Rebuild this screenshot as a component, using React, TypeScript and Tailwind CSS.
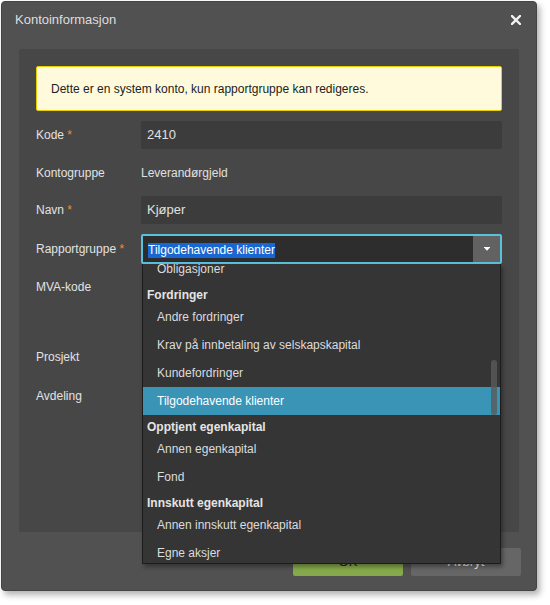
import React from 'react';

type Option = { kind: 'group' | 'item'; label: string; selected?: boolean };

const options: Option[] = [
  { kind: 'item', label: 'Obligasjoner' },
  { kind: 'group', label: 'Fordringer' },
  { kind: 'item', label: 'Andre fordringer' },
  { kind: 'item', label: 'Krav på innbetaling av selskapskapital' },
  { kind: 'item', label: 'Kundefordringer' },
  { kind: 'item', label: 'Tilgodehavende klienter', selected: true },
  { kind: 'group', label: 'Opptjent egenkapital' },
  { kind: 'item', label: 'Annen egenkapital' },
  { kind: 'item', label: 'Fond' },
  { kind: 'group', label: 'Innskutt egenkapital' },
  { kind: 'item', label: 'Annen innskutt egenkapital' },
  { kind: 'item', label: 'Egne aksjer' },
];

function Label({ text, required }: { text: string; required?: boolean }) {
  return (
    <div className="w-[105px] shrink-0 text-[12px] text-[#e2e2e2]">
      {text}
      {required && <span className="text-[#e8912d]"> *</span>}
    </div>
  );
}

function RapportSelect() {
  return (
    <div className="relative flex-1">
      <div className="flex h-[30px] items-stretch rounded-[2px] border-2 border-[#5bc0de] bg-[#2d2d2d]">
        <div className="flex flex-1 items-center pl-[5px] pt-[2px] text-[12px]">
          <span className="bg-[#1967d2] leading-[15px] text-white">Tilgodehavende klienter</span>
        </div>
        <div className="flex w-[27px] items-center justify-center bg-[#626262]">
          <svg width="6" height="4" viewBox="0 0 6 4">
            <rect x="0" y="0" width="6" height="1" fill="#fff" />
            <path d="M0.5 1 L5.5 1 L3 3.8 Z" fill="#fff" />
          </svg>
        </div>
      </div>

      {/* open dropdown list */}
      <div className="absolute left-px right-px top-[30px] z-10 h-[300px] overflow-hidden border border-t-0 border-[#1c1c1c] bg-[#353535] shadow-[2px_3px_4px_rgba(0,0,0,0.35)]">
        <div className="-mt-[9px]">
          {options.map((o, i) =>
            o.kind === 'group' ? (
              <div key={i} className="flex h-[20px] items-end pl-[4px] text-[12px] font-bold leading-[16px] text-[#e4e4e4]">
                {o.label}
              </div>
            ) : (
              <div
                key={i}
                className={`flex h-[28px] items-center pl-[14px] text-[12px] ${
                  o.selected ? 'bg-[#3a94b6] text-white' : 'text-[#dcdcdc]'
                }`}
              >
                {o.label}
              </div>
            )
          )}
        </div>
        <div className="absolute right-[3px] top-[96px] h-[55px] w-[6px] rounded-full bg-[#5a5a5a]/80" />
      </div>
    </div>
  );
}

export default function App() {
  return (
    <div className="min-h-[605px] bg-white p-px" style={{ fontFamily: '"Liberation Sans", Arial, sans-serif' }}>
      <div className="flex h-[590px] w-[536px] flex-col rounded-[4px] border border-[#444] bg-[#515151] shadow-[3px_4px_6px_rgba(0,0,0,0.3)]">
        {/* Title bar */}
        <div className="flex h-[47px] shrink-0 items-start justify-between pl-[13px] pr-[15px] pt-[8px]">
          <span className="text-[13px] text-[#dedede]">Kontoinformasjon</span>
          <svg width="10" height="10" viewBox="0 0 10 10" className="mt-[5px]">
            <path d="M1 1 L9 9 M9 1 L1 9" stroke="#f2f2f2" strokeWidth="2.4" strokeLinecap="square" />
          </svg>
        </div>

        {/* Content panel */}
        <div className="mx-[17px] flex h-[483px] flex-col rounded-[2px] bg-[#474747] px-[17px] pt-[17px]">
          <div className="flex h-[45px] items-center rounded-[2px] border border-[#e9cf00] bg-[#fffadb] px-[14px] text-[12px] text-[#222]">
            Dette er en system konto, kun rapportgruppe kan redigeres.
          </div>

          <div className="mt-[10px] flex items-center">
            <Label text="Kode" required />
            <div className="flex h-[28px] flex-1 items-center rounded-[2px] bg-[#3c3c3c] pl-[6px] text-[13px] text-[#e0e0e0]">
              2410
            </div>
          </div>

          <div className="mt-[10px] flex h-[28px] items-center">
            <Label text="Kontogruppe" />
            <div className="text-[12px] text-[#e0e0e0]">Leverandørgjeld</div>
          </div>

          <div className="mt-[9px] flex items-center">
            <Label text="Navn" required />
            <div className="flex h-[28px] flex-1 items-center rounded-[2px] bg-[#3c3c3c] pl-[6px] text-[13px] text-[#e0e0e0]">
              Kjøper
            </div>
          </div>

          <div className="mt-[10px] flex items-center">
            <Label text="Rapportgruppe" required />
            <RapportSelect />
          </div>

          <div className="mt-[9px] flex h-[61px] items-start">
            <div className="flex h-[28px] items-center">
              <Label text="MVA-kode" />
            </div>
          </div>

          <div className="mt-[9px] flex h-[28px] items-center">
            <Label text="Prosjekt" />
          </div>

          <div className="mt-[11px] flex h-[28px] items-center">
            <Label text="Avdeling" />
          </div>
        </div>

        {/* Footer */}
        <div className="flex justify-end gap-[8px] pr-[15px] pt-[16px]">
          <button className="h-[28px] w-[110px] rounded-[2px] bg-[#85a94b] text-[13px] text-[#222]">OK</button>
          <button className="h-[28px] w-[110px] rounded-[2px] bg-[#666] text-[13px] text-[#eee]">Avbryt</button>
        </div>
      </div>
    </div>
  );
}
